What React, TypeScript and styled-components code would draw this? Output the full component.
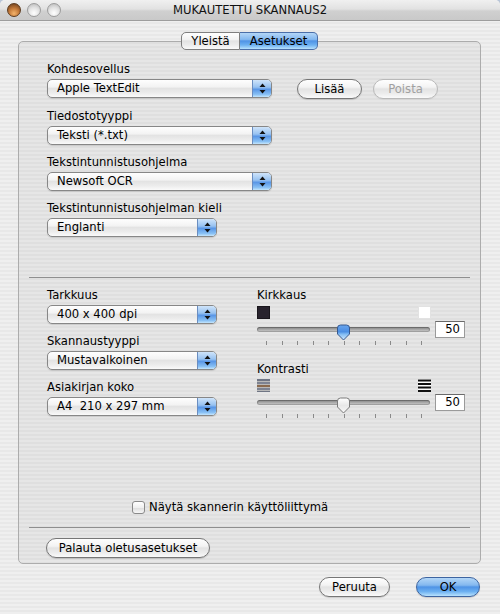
import React from "react";
import styled, { createGlobalStyle, css } from "styled-components";

const Global = createGlobalStyle`
  html, body { margin: 0; padding: 0; background: #b9c6d8; }
  body {
    font-family: "DejaVu Sans", "Liberation Sans", sans-serif;
    font-size: 11.6px;
    color: #000;
  }
  * { box-sizing: border-box; }
`;

const Window = styled.div`
  width: 500px;
  height: 614px;
  display: flex;
  flex-direction: column;
  background: repeating-linear-gradient(
    to bottom,
    #efefef 0px,
    #efefef 2px,
    #e8e8e8 2px,
    #e8e8e8 4px
  );
  border-radius: 5px 5px 0 0;
  overflow: hidden;
`;

const TitleBar = styled.div`
  height: 21px;
  display: grid;
  grid-template-columns: 1fr auto 1fr;
  align-items: center;
  background: linear-gradient(to bottom, #f0f0f0 0%, #e2e2e2 45%, #d0d0d0 55%, #c9c9c9 100%);
  border-bottom: 1px solid #9d9d9d;
`;

const Lights = styled.div`
  display: flex;
  gap: 6px;
  padding-left: 7px;
`;

const Light = styled.span<{ $close?: boolean }>`
  width: 14px;
  height: 14px;
  border-radius: 50%;
  ${(p) =>
    p.$close
      ? css`
          border: 1px solid #5d3b1e;
          background: radial-gradient(circle at 50% 78%, #f3b36b 0%, #c47a3a 45%, #7d4a22 85%);
        `
      : css`
          border: 1px solid #9c9c9c;
          background: radial-gradient(circle at 50% 75%, #ffffff 0%, #e2e2e2 50%, #bdbdbd 90%);
        `}
`;

const Title = styled.div`
  font-size: 11.6px;
  color: #111;
  white-space: nowrap;
`;

const Content = styled.div`
  flex: 1;
  display: flex;
  flex-direction: column;
  padding: 11px 19px 17px 18px;
`;

const TabRow = styled.div`
  display: flex;
  justify-content: center;
  margin-bottom: -9px;
  position: relative;
  z-index: 1;
`;

const grayGloss = css`
  background: linear-gradient(
    to bottom,
    #fefefe 0%,
    #f3f3f3 40%,
    #e3e3e3 50%,
    #ececec 75%,
    #fafafa 100%
  );
`;

const blueGloss = css`
  background: linear-gradient(
    to bottom,
    #b3d6f7 0%,
    #84b8ef 40%,
    #4f93e6 50%,
    #6cb0f1 75%,
    #b8e2fd 100%
  );
`;

const Tab = styled.div<{ $active?: boolean; $w: number; $first?: boolean }>`
  width: ${(p) => p.$w}px;
  height: 18px;
  display: flex;
  align-items: center;
  justify-content: center;
  border: 1px solid #7f7f7f;
  ${(p) => (p.$active ? blueGloss : grayGloss)}
  ${(p) =>
    p.$first
      ? css`
          border-radius: 5px 0 0 5px;
        `
      : css`
          border-left: none;
          border-radius: 0 5px 5px 0;
          border-color: #4a6ea8;
        `}
`;

const Box = styled.div`
  flex: 1;
  display: flex;
  flex-direction: column;
  border: 1px solid #acacac;
  border-radius: 5px;
  background: rgba(0, 0, 0, 0.035);
  padding-top: 19px;
  padding-bottom: 5px;
`;

const TopSection = styled.div`
  display: flex;
  flex-direction: column;
  gap: 9px;
  padding-left: 28px;
`;

const Field = styled.div`
  display: flex;
  flex-direction: column;
`;

const Label = styled.div`
  line-height: 16px;
  height: 16px;
  margin-bottom: 2px;
  white-space: nowrap;
`;

const FieldRow = styled.div`
  display: flex;
  align-items: flex-start;
`;

const Separator = styled.div<{ $mt: number; $mb?: number }>`
  height: 1px;
  background: #8f8f8f;
  margin: ${(p) => p.$mt}px 10px ${(p) => p.$mb ?? 0}px 10px;
`;

const PopupBox = styled.div<{ $w: number }>`
  width: ${(p) => p.$w}px;
  height: 19px;
  display: flex;
  border: 1px solid #878787;
  border-radius: 5px;
  overflow: hidden;
  box-shadow: 0 1px 1px rgba(0, 0, 0, 0.12);
  ${grayGloss}
`;

const PopupText = styled.div`
  flex: 1;
  padding-left: 9px;
  line-height: 17px;
  white-space: pre;
`;

const PopupArrow = styled.div`
  width: 19px;
  display: flex;
  align-items: center;
  justify-content: center;
  border-left: 1px solid #6a8dc0;
  background: linear-gradient(
    to bottom,
    #cfe4fa 0%,
    #97c2f1 42%,
    #5996e6 55%,
    #88c0f4 85%,
    #c5e6fd 100%
  );
`;

const Button = styled.div<{ $w: number; $blue?: boolean; $disabled?: boolean; $ml?: number }>`
  width: ${(p) => p.$w}px;
  height: 20px;
  margin-left: ${(p) => p.$ml ?? 0}px;
  border-radius: 10px;
  display: flex;
  align-items: center;
  justify-content: center;
  border: 1px solid ${(p) => (p.$blue ? "#3d64a0" : p.$disabled ? "#b9b9b9" : "#767676")};
  color: ${(p) => (p.$disabled ? "#a0a0a0" : "#000")};
  box-shadow: 0 1px 1px rgba(0, 0, 0, ${(p) => (p.$disabled ? 0.05 : 0.15)});
  white-space: nowrap;
  ${(p) => (p.$blue ? blueGloss : grayGloss)}
`;

const ButtonGroup = styled.div`
  display: flex;
  gap: 11px;
  margin-left: 25px;
`;

const BottomGrid = styled.div`
  display: grid;
  grid-template-columns: 170px 208px;
  column-gap: 40px;
  padding-left: 28px;
  margin-top: 9px;
`;

const LeftCol = styled.div`
  display: flex;
  flex-direction: column;
  gap: 9px;
`;

const RightCol = styled.div`
  display: flex;
  flex-direction: column;
`;

const SliderLabel = styled(Label)<{ $mt?: number }>`
  margin-top: ${(p) => p.$mt ?? 0}px;
  margin-bottom: 0;
`;

const IconRow = styled.div<{ $mt: number }>`
  width: 174px;
  height: 13px;
  margin-top: ${(p) => p.$mt}px;
  display: flex;
  justify-content: space-between;
`;

const Swatch = styled.span<{ $dark?: boolean }>`
  width: 13px;
  height: 13px;
  background: ${(p) => (p.$dark ? "#28232d" : "#ffffff")};
  border: 1px solid ${(p) => (p.$dark ? "#19161c" : "#e2e2e2")};
`;

const SliderRow = styled.div`
  display: flex;
  align-items: center;
  gap: 5px;
  height: 18px;
  margin-top: 1px;
`;

const TrackWrap = styled.div`
  width: 173px;
  height: 18px;
  position: relative;
  display: flex;
  align-items: center;
`;

const Track = styled.div`
  width: 100%;
  height: 5px;
  border-radius: 3px;
  background: linear-gradient(to bottom, #7e7e7e 0%, #a9a9a9 50%, #cfcfcf 100%);
  box-shadow: inset 0 0 0 1px rgba(0, 0, 0, 0.2);
`;

const Thumb = styled.svg`
  position: absolute;
  top: 4px;
`;

const ValueBox = styled.div`
  width: 30px;
  height: 17px;
  background: #fff;
  border: 1px solid #9a9a9a;
  border-top-color: #6a6a6a;
  text-align: right;
  padding-right: 4px;
  line-height: 15px;
`;

const Ticks = styled.div`
  width: 173px;
  height: 4px;
  margin-top: 3px;
  padding: 0 8px 0 9px;
  display: flex;
  justify-content: space-between;
`;

const Tick = styled.span`
  width: 1px;
  height: 4px;
  background: #8a8a8a;
`;

const CheckRow = styled.div`
  margin-top: auto;
  margin-left: 113px;
  height: 16px;
  display: flex;
  align-items: center;
  gap: 4px;
`;

const CheckBox = styled.span`
  width: 13px;
  height: 13px;
  border: 1px solid #8a8a8a;
  border-radius: 3px;
  background: linear-gradient(to bottom, #ffffff 0%, #f0f0f0 50%, #dedede 55%, #f7f7f7 100%);
`;

const Footer = styled.div`
  margin-top: 13px;
  display: flex;
  justify-content: flex-end;
  gap: 26px;
  padding-right: 1px;
`;

const Arrows = () => (
  <svg width="7" height="11" viewBox="0 0 7 11">
    <polygon points="3.5,0.5 6.5,4 0.5,4" fill="#111" />
    <polygon points="0.5,7 6.5,7 3.5,10.5" fill="#111" />
  </svg>
);

const Popup = ({ w, value }: { w: number; value: string }) => (
  <PopupBox $w={w}>
    <PopupText>{value}</PopupText>
    <PopupArrow>
      <Arrows />
    </PopupArrow>
  </PopupBox>
);

const LowContrastIcon = () => (
  <svg width="13" height="13" viewBox="0 0 13 13">
    <rect x="0" y="0" width="13" height="13" fill="#b8b8b8" />
    <rect x="0" y="0" width="13" height="2" fill="#6f7584" />
    <rect x="0" y="3" width="13" height="2" fill="#7d8392" />
    <rect x="0" y="6" width="13" height="2" fill="#8a6a4e" />
    <rect x="0" y="9" width="13" height="2" fill="#7d8392" />
    <rect x="0" y="12" width="13" height="1" fill="#6f7584" />
  </svg>
);

const HighContrastIcon = () => (
  <svg width="13" height="13" viewBox="0 0 13 13">
    <rect x="0" y="0" width="13" height="13" fill="#ffffff" />
    <rect x="0" y="0.5" width="13" height="2" fill="#111" />
    <rect x="0" y="4" width="13" height="2" fill="#111" />
    <rect x="0" y="7.5" width="13" height="2" fill="#111" />
    <rect x="0" y="11" width="13" height="2" fill="#111" />
  </svg>
);

const Slider = ({ value, id, active }: { value: number; id: string; active?: boolean }) => {
  const left = (value / 100) * (173 - 15);
  return (
    <SliderRow>
      <TrackWrap>
        <Track />
        <Thumb width="15" height="17" viewBox="0 0 15 17" style={{ left }}>
          <defs>
            <linearGradient id={id} x1="0" y1="0" x2="0" y2="1">
              {active ? (
                <>
                  <stop offset="0" stopColor="#6aa6ee" />
                  <stop offset="0.45" stopColor="#4a8de3" />
                  <stop offset="0.6" stopColor="#7fbaf3" />
                  <stop offset="1" stopColor="#d5ecff" />
                </>
              ) : (
                <>
                  <stop offset="0" stopColor="#ffffff" />
                  <stop offset="0.5" stopColor="#e8e8e8" />
                  <stop offset="1" stopColor="#f8f8f8" />
                </>
              )}
            </linearGradient>
          </defs>
          <path
            d="M1.5 4 Q1.5 1 4.5 1 H10.5 Q13.5 1 13.5 4 V10 L7.5 16 L1.5 10 Z"
            fill={`url(#${id})`}
            stroke={active ? "#37598f" : "#7a7a7a"}
            strokeWidth="1"
          />
        </Thumb>
      </TrackWrap>
      <ValueBox>{value}</ValueBox>
    </SliderRow>
  );
};

const TickMarks = () => (
  <Ticks>
    {Array.from({ length: 11 }).map((_, i) => (
      <Tick key={i} />
    ))}
  </Ticks>
);

export default function App() {
  return (
    <>
      <Global />
      <Window>
        <TitleBar>
          <Lights>
            <Light $close />
            <Light />
            <Light />
          </Lights>
          <Title>MUKAUTETTU SKANNAUS2</Title>
          <div />
        </TitleBar>
        <Content>
          <TabRow>
            <Tab $first $w={59}>
              Yleistä
            </Tab>
            <Tab $active $w={78}>
              Asetukset
            </Tab>
          </TabRow>
          <Box>
            <TopSection>
              <Field>
                <Label>Kohdesovellus</Label>
                <FieldRow>
                  <Popup w={225} value="Apple TextEdit" />
                  <ButtonGroup>
                    <Button $w={65}>Lisää</Button>
                    <Button $w={65} $disabled>
                      Poista
                    </Button>
                  </ButtonGroup>
                </FieldRow>
              </Field>
              <Field>
                <Label>Tiedostotyyppi</Label>
                <Popup w={225} value="Teksti (*.txt)" />
              </Field>
              <Field>
                <Label>Tekstintunnistusohjelma</Label>
                <Popup w={225} value="Newsoft OCR" />
              </Field>
              <Field>
                <Label>Tekstintunnistusohjelman kieli</Label>
                <Popup w={170} value="Englanti" />
              </Field>
            </TopSection>
            <Separator $mt={40} />
            <BottomGrid>
              <LeftCol>
                <Field>
                  <Label>Tarkkuus</Label>
                  <Popup w={170} value="400 x 400 dpi" />
                </Field>
                <Field>
                  <Label>Skannaustyyppi</Label>
                  <Popup w={170} value="Mustavalkoinen" />
                </Field>
                <Field>
                  <Label>Asiakirjan koko</Label>
                  <Popup w={170} value="A4  210 x 297 mm" />
                </Field>
              </LeftCol>
              <RightCol>
                <SliderLabel>Kirkkaus</SliderLabel>
                <IconRow $mt={3}>
                  <Swatch $dark />
                  <Swatch />
                </IconRow>
                <Slider value={50} id="thumbA" active />
                <TickMarks />
                <SliderLabel $mt={16}>Kontrasti</SliderLabel>
                <IconRow $mt={2}>
                  <LowContrastIcon />
                  <HighContrastIcon />
                </IconRow>
                <Slider value={50} id="thumbB" />
                <TickMarks />
              </RightCol>
            </BottomGrid>
            <CheckRow>
              <CheckBox />
              <span>Näytä skannerin käyttöliittymä</span>
            </CheckRow>
            <Separator $mt={12} $mb={10} />
            <Button $w={164} $ml={27}>
              Palauta oletusasetukset
            </Button>
          </Box>
          <Footer>
            <Button $w={71}>Peruuta</Button>
            <Button $w={64} $blue>
              OK
            </Button>
          </Footer>
        </Content>
      </Window>
    </>
  );
}
